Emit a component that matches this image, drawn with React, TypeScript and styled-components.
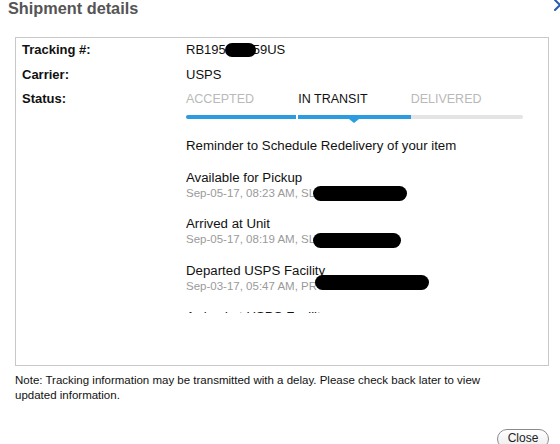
import { FC } from 'react'
import styled, { createGlobalStyle } from 'styled-components'

const GlobalStyle = createGlobalStyle`
  html, body {
    margin: 0;
    padding: 0;
    background: #fff;
    overflow: hidden;
  }
  body {
    font-family: 'Liberation Sans', Arial, sans-serif;
    color: #111;
  }
`

const Dialog = styled.div`
  width: 560px;
  height: 444px;
  overflow: hidden;
`
const Header = styled.div`
  display: flex;
  justify-content: space-between;
  align-items: flex-start;
  height: 37px;
  padding-left: 8px;
`
const Title = styled.h2`
  margin: 0;
  font-size: 16.3px;
  line-height: 17px;
  font-weight: bold;
  color: #555;
`
const CloseX = styled.svg`
  margin-top: -3px;
  margin-right: -8px;
  flex: none;
`
const Box = styled.div`
  margin-left: 15px;
  width: 534px;
  height: 329px;
  box-sizing: border-box;
  border: 1px solid #c8c8c8;
  padding: 0 6px;
`
const InfoRow = styled.div`
  display: flex;
  align-items: flex-start;
  font-size: 13px;
  line-height: 24.5px;
`
const Label = styled.div`
  width: 164px;
  flex: none;
  font-weight: bold;
`
const Value = styled.div`
  white-space: nowrap;
  height: 24.5px;
`
const Redact = styled.span<{ $w: number; $h?: number; $dy?: number; $ml?: number }>`
  display: inline-block;
  vertical-align: middle;
  width: ${p => p.$w}px;
  height: ${p => p.$h ?? 13}px;
  margin-left: ${p => p.$ml ?? -3}px;
  margin-right: -3px;
  background: #000;
  border-radius: 8px;
  transform: translateY(${p => p.$dy ?? 0}px);
  position: relative;
  z-index: 1;
`
const StatusCell = styled.div`
  width: 337px;
`
const Steps = styled.div`
  display: grid;
  grid-template-columns: repeat(3, 1fr);
  height: 24.5px;
  align-items: center;
`
const Step = styled.div<{ $active?: boolean }>`
  font-size: 12.5px;
  color: ${p => (p.$active ? '#111' : '#b9b9b9')};
  text-transform: uppercase;
`
const Track = styled.div`
  display: grid;
  grid-template-columns: repeat(3, 1fr);
  height: 4px;
  margin-top: 3.5px;
  border-radius: 3px;
  background: #e4e4e4;
`
const Segment = styled.div<{ $done?: boolean; $first?: boolean }>`
  background: ${p => (p.$done ? '#2b9ce0' : 'transparent')};
  border-radius: ${p => (p.$first ? '3px 0 0 3px' : '0')};
  border-right: ${p => (p.$first ? '2px solid #fff' : 'none')};
  position: relative;
`
const Pointer = styled.span`
  position: absolute;
  left: 50%;
  top: 4px;
  margin-left: -5px;
  width: 0;
  height: 0;
  border-left: 5px solid transparent;
  border-right: 5px solid transparent;
  border-top: 4px solid #2b9ce0;
`
const Content = styled.div`
  margin-left: 164px;
`
const Reminder = styled.p`
  margin: 17px 0 0;
  font-size: 13.25px;
  line-height: 20px;
`
const EventList = styled.ul`
  list-style: none;
  margin: 0;
  padding: 14px 0 0;
  height: 143px;
  overflow: hidden;
  display: flex;
  flex-direction: column;
  gap: 15px;
`
const Event = styled.li`
  display: flex;
  flex-direction: column;
  flex: none;
`
const EventTitle = styled.span`
  font-size: 13.25px;
  line-height: 16px;
`
const EventMeta = styled.span`
  white-space: nowrap;
  font-size: 11.5px;
  line-height: 15px;
  color: #9a9a9a;
`
const Note = styled.p`
  margin: 7px 15px 0;
  font-size: 11.5px;
  line-height: 15px;
  width: 500px;
`
const Footer = styled.div`
  display: flex;
  justify-content: flex-end;
  padding-right: 11px;
  margin-top: 26px;
`
const CloseButton = styled.button`
  font-family: 'Liberation Sans', Arial, sans-serif;
  font-size: 12px;
  color: #222;
  width: 52px;
  height: 20px;
  padding: 0 0 2px;
  border: 1px solid #8a8a8a;
  border-radius: 10px;
  background: linear-gradient(#ffffff, #ececec);
`

interface IEvent {
  title: string,
  meta: string,
  blob: number,
  dy?: number,
}

const events: IEvent[] = [
  { title: 'Available for Pickup', meta: 'Sep-05-17, 08:23 AM, SL', blob: 94, dy: 0 },
  { title: 'Arrived at Unit', meta: 'Sep-05-17, 08:19 AM, SL', blob: 88, dy: 0 },
  { title: 'Departed USPS Facility', meta: 'Sep-03-17, 05:47 AM, PR', blob: 114, dy: -4 },
  { title: 'Arrived at USPS Facility', meta: 'Sep-03-17, 01:12 AM, PR', blob: 0 },
]

const App: FC = () => {
  return (
    <Dialog>
      <GlobalStyle />
      <Header>
        <Title>Shipment details</Title>
        <CloseX width="16" height="16" viewBox="0 0 16 16">
          <path d="M3 3 L13 13 M13 3 L3 13" stroke="#2a5db0" strokeWidth="2" strokeLinecap="round" />
        </CloseX>
      </Header>
      <Box>
        <InfoRow>
          <Label>Tracking #:</Label>
          <Value>
            RB195<Redact $w={31} $h={14} $dy={-1} $ml={-1} />59US
          </Value>
        </InfoRow>
        <InfoRow>
          <Label>Carrier:</Label>
          <Value>USPS</Value>
        </InfoRow>
        <InfoRow>
          <Label>Status:</Label>
          <StatusCell>
            <Steps>
              <Step>Accepted</Step>
              <Step $active>In Transit</Step>
              <Step>Delivered</Step>
            </Steps>
            <Track>
              <Segment $done $first />
              <Segment $done>
                <Pointer />
              </Segment>
              <Segment />
            </Track>
          </StatusCell>
        </InfoRow>
        <Content>
          <Reminder>Reminder to Schedule Redelivery of your item</Reminder>
          <EventList>
            {events.map(ev => (
              <Event key={ev.title}>
                <EventTitle>{ev.title}</EventTitle>
                <EventMeta>
                  {ev.meta}
                  {ev.blob > 0 && <Redact $w={ev.blob} $h={15} $dy={ev.dy} $ml={-2} />}
                </EventMeta>
              </Event>
            ))}
          </EventList>
        </Content>
      </Box>
      <Note>
        Note: Tracking information may be transmitted with a delay. Please check back later to view
        updated information.
      </Note>
      <Footer>
        <CloseButton>Close</CloseButton>
      </Footer>
    </Dialog>
  )
}

export default App
